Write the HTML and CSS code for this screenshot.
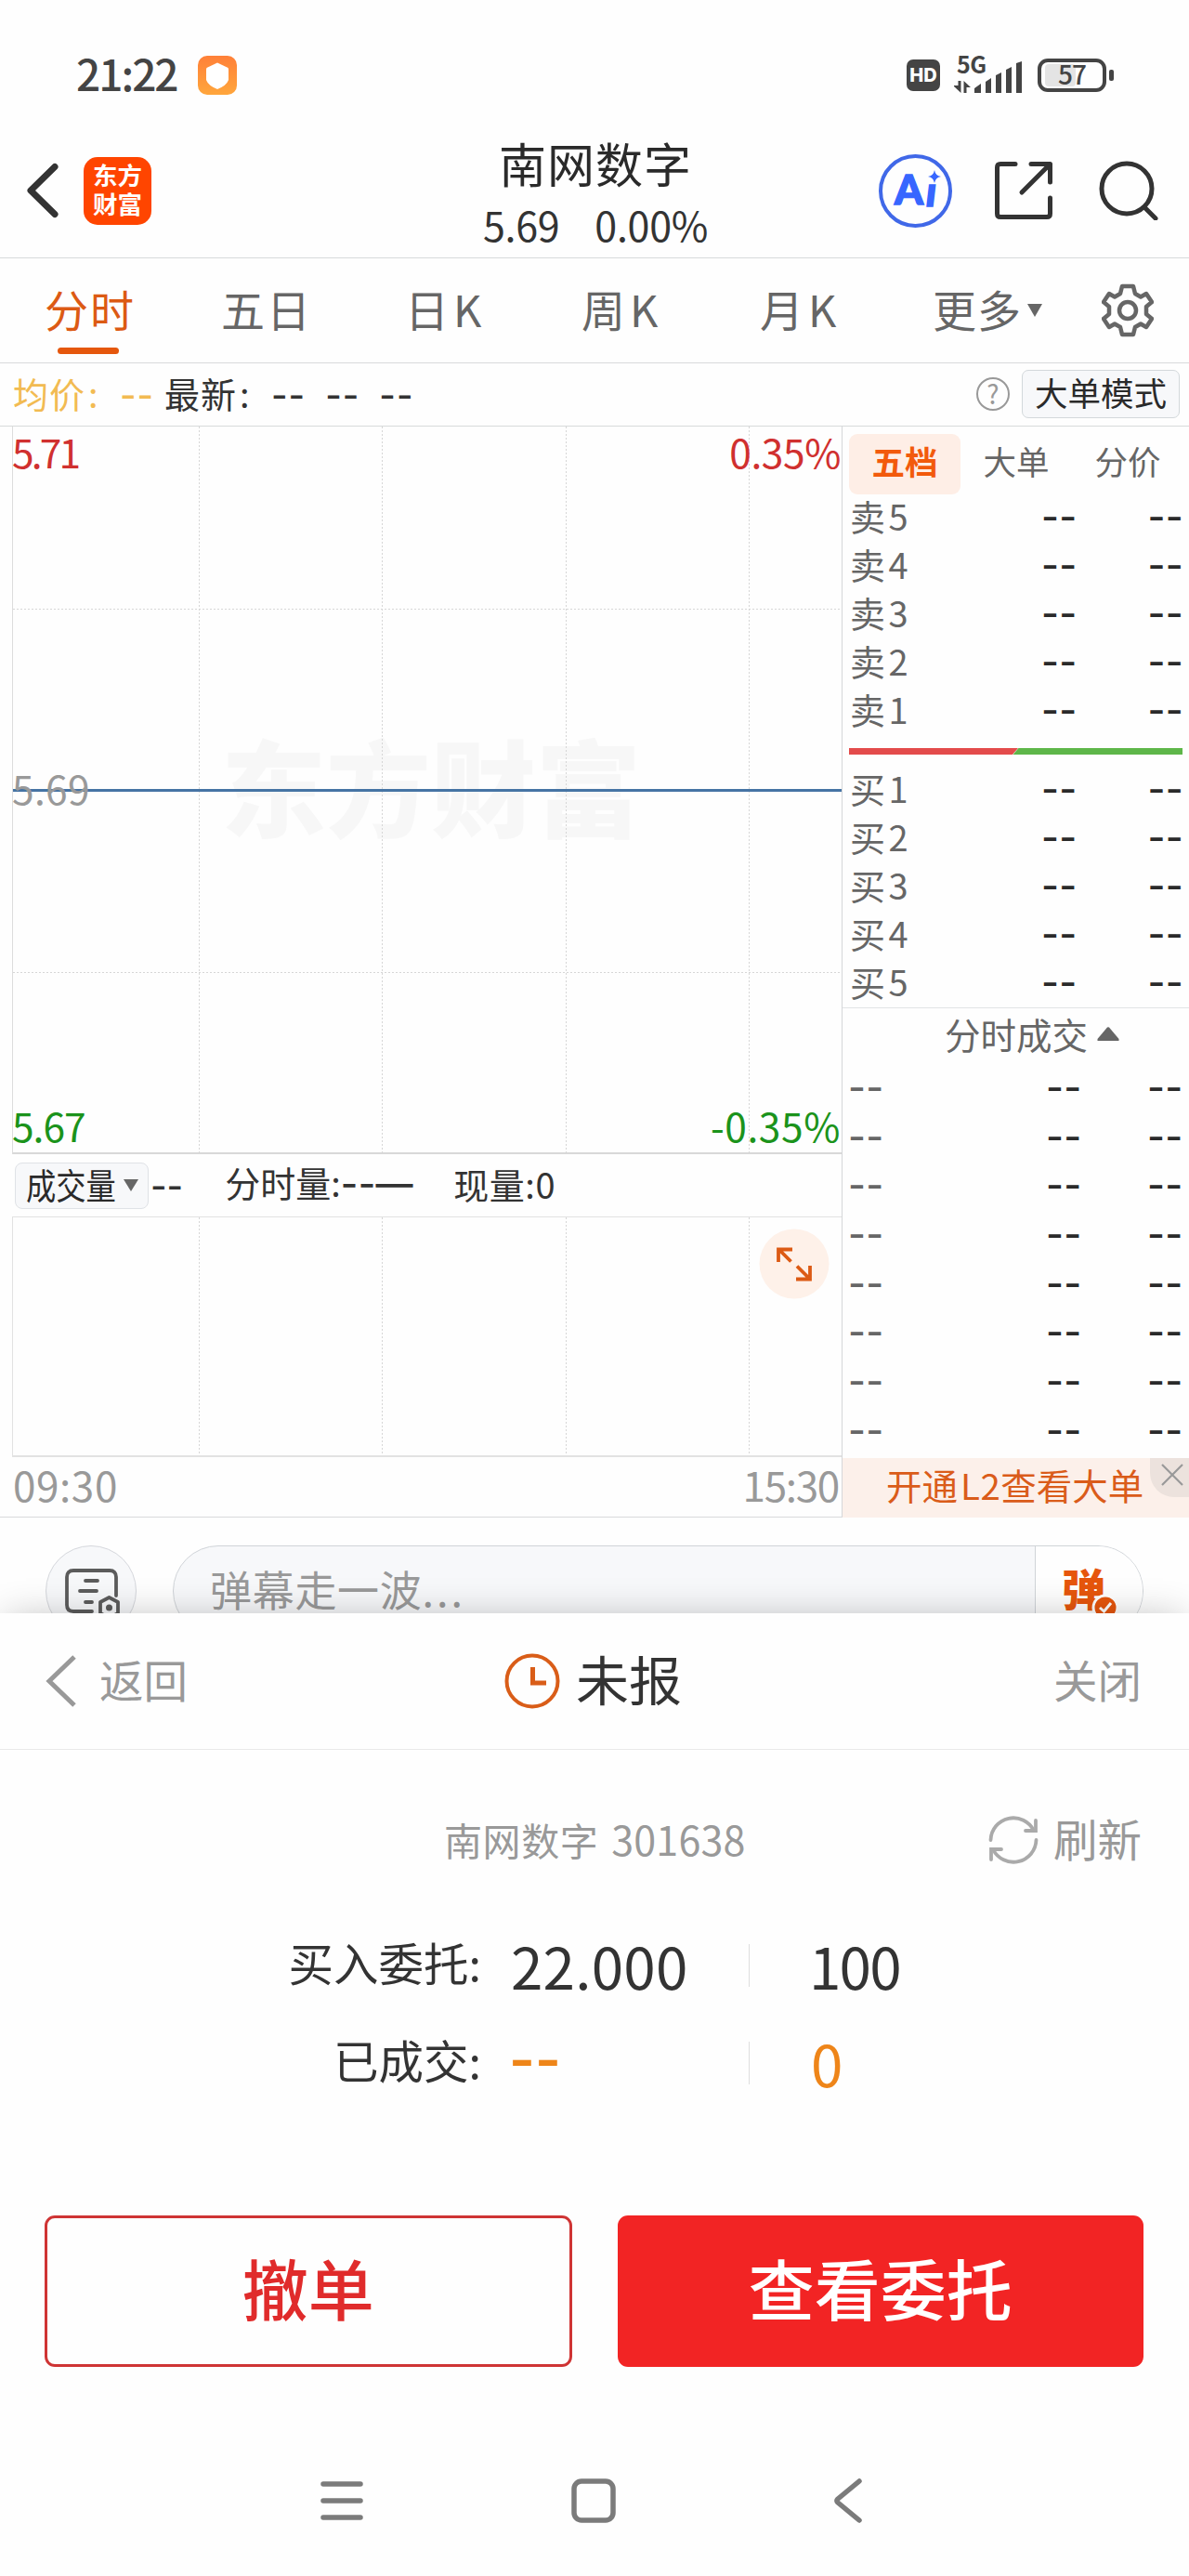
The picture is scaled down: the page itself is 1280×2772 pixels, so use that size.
FILE: index.html
```html
<!DOCTYPE html>
<html lang="zh-CN">
<head>
<meta charset="utf-8">
<title>南网数字</title>
<link rel="stylesheet" href="styles.css">
</head>
<body>
<div class="status">
  <span class="clock">21:22</span>
  <svg class="shield" width="42" height="42" viewBox="0 0 42 42"><defs><linearGradient id="g" x1="0" y1="0" x2="0" y2="1"><stop offset="0" stop-color="#ff8038"/><stop offset="1" stop-color="#ffa63c"/></linearGradient></defs><rect width="42" height="42" rx="10" fill="url(#g)"/><path d="M21 7.500L32.500 13Q33 14 33 15V26Q31 32 21 36Q11 32 9 26V15Q9 14 9.500 13Z" fill="#fff"/></svg>
  <span class="hd">HD</span>
  <span class="signal"><svg width="74" height="40" viewBox="0 0 74 40" fill="#444"><path d="M4.500 26H7.500V39L0 32V31H4.500ZM10.500 26L18 33H13.500V39H10.500Z"/><path d="M22 34L29 29V39H22ZM34 27L40 23V39H34ZM45 20L51 17V39H45ZM56 14L62 11V39H56ZM67 7L73 5V39H67Z"/></svg><span class="net">5G</span></span>
  <span class="battery"><span class="level"></span><span class="pct">57</span></span><span class="tip"></span>
</div>

<header class="header">
  <svg class="back" width="36" height="60" viewBox="0 0 36 60" fill="none" stroke="#333" stroke-width="7" stroke-linecap="round" stroke-linejoin="round"><path d="M31 4.500L5 30L31 55.500"/></svg>
  <span class="logo"><span>东方</span><span>财富</span></span>
  <div class="stock"><div class="stock-name">南网数字</div><div class="stock-price"><span>5.69</span><span>0.00%</span></div></div>
  <div class="ai"><b>A</b><b class="ai-i">ı</b><svg width="14" height="14" viewBox="0 0 14 14"><path d="M7 0Q8 6 14 7Q8 8 7 14Q6 8 0 7Q6 6 7 0Z" fill="#3766ff"/></svg></div>
  <svg class="share" width="62" height="62" viewBox="0 0 62 62" fill="none" stroke="#333" stroke-width="5" stroke-linecap="round" stroke-linejoin="round"><path d="M22 2.500H6Q2.500 2.500 2.500 6V56Q2.500 59.500 6 59.500H56Q59.500 59.500 59.500 56V39M39 2.500H59.500V22M57 5L29 33"/></svg>
  <svg class="search" width="64" height="64" viewBox="0 0 64 64" fill="none" stroke="#333" stroke-width="5" stroke-linecap="round"><circle cx="30" cy="30" r="27"/><path d="M50 51L61 62"/></svg>
</header>

<nav class="tabs">
  <span class="tab on">分时</span><span class="tab">五日</span><span class="tab">日K</span><span class="tab">周K</span><span class="tab">月K</span>
  <span class="tab more">更多<svg width="16" height="14" viewBox="0 0 16 14"><path d="M0 0H16L8 14Z" fill="#666"/></svg></span>
  <svg class="gear" width="56" height="58" viewBox="-28 -29 56 58" fill="none" stroke="#666" stroke-width="4.500" stroke-linejoin="round"><path d="M-6 -26H6L8 -18L14 -14.500L20 -18L26 -9L20 -4V4L26 9L20 18L14 14.500L8 18L6 26H-6L-8 18L-14 14.500L-20 18L-26 9L-20 4V-4L-26 -9L-20 -18L-14 -14.500L-8 -18Z"/><circle r="9"/></svg>
</nav>

<div class="info">
  <span class="avg">均价<i>:</i><em>--</em></span>
  <span class="last">最新<i>:</i><em>--</em><em>--</em><em>--</em></span>
  <span class="help">?</span>
  <span class="mode">大单模式</span>
</div>

<main class="main">
  <section class="left">
    <div class="chart">
      <div class="watermark">东方财富</div>
      <svg class="grid" width="892" height="782" viewBox="0 0 892 782" fill="none" stroke="#d6d6d6" stroke-dasharray="2 2"><path d="M200.500 0V782M397.500 0V782M595.500 0V782M792.500 0V782M0 196.500H892M0 587.500H892"/><path d="M0 391.500H892" stroke="#4674a4" stroke-width="3" stroke-dasharray="none"/></svg>
      <span class="lab tl">5.71</span><span class="lab tr">0.35%</span><span class="lab ml">5.69</span><span class="lab bl">5.67</span><span class="lab br">-0.35%</span>
    </div>
    <div class="volbar">
      <span class="volbtn"><span>成交量</span><svg width="16" height="13" viewBox="0 0 16 13"><path d="M0 0H16L8 13Z" fill="#666"/></svg></span>
      <em>--</em>
      <span class="v1">分时量:<em>--—</em></span>
      <span class="v2">现量:0</span>
    </div>
    <div class="volume">
      <svg class="grid" width="892" height="256" viewBox="0 0 892 256" fill="none" stroke="#d6d6d6" stroke-dasharray="2 2"><path d="M200.500 0V256M397.500 0V256M595.500 0V256M792.500 0V256"/></svg>
      <svg class="expand" width="76" height="76" viewBox="0 0 76 76" fill="none" stroke="#dc5a14" stroke-width="3.800"><circle cx="38" cy="38" r="37.500" fill="#fef1e9" stroke="none"/><path d="M21 36V22.500H36M22 23L34.500 35.500M55 40V54.500H40M54 53.500L41 40.500"/></svg>
    </div>
    <div class="times"><span>09:30</span><span class="end">15:30</span></div>
  </section>

  <aside class="book">
    <div class="btabs"><span class="bt on">五档</span><span class="bt">大单</span><span class="bt">分价</span></div>
    <div class="rows">
      <div class="row"><span>卖5</span><em>--</em><em>--</em></div>
      <div class="row"><span>卖4</span><em>--</em><em>--</em></div>
      <div class="row"><span>卖3</span><em>--</em><em>--</em></div>
      <div class="row"><span>卖2</span><em>--</em><em>--</em></div>
      <div class="row"><span>卖1</span><em>--</em><em>--</em></div>
    </div>
    <svg class="ratio" width="359" height="7" viewBox="0 0 359 7"><path d="M0 0H182L176 7H0Z" fill="#e34b4b"/><path d="M182.500 0H359V7H176.500Z" fill="#5eb649"/></svg>
    <div class="rows buy">
      <div class="row"><span>买1</span><em>--</em><em>--</em></div>
      <div class="row"><span>买2</span><em>--</em><em>--</em></div>
      <div class="row"><span>买3</span><em>--</em><em>--</em></div>
      <div class="row"><span>买4</span><em>--</em><em>--</em></div>
      <div class="row"><span>买5</span><em>--</em><em>--</em></div>
    </div>
    <div class="deals-head">分时成交<svg width="24" height="15" viewBox="0 0 24 15"><path d="M11 .5Q12 0 13 .5L23.500 13V15H.500V13Z" fill="#666"/></svg></div>
    <div class="deals">
      <div class="deal"><em>--</em><em>--</em><em>--</em></div>
      <div class="deal"><em>--</em><em>--</em><em>--</em></div>
      <div class="deal"><em>--</em><em>--</em><em>--</em></div>
      <div class="deal"><em>--</em><em>--</em><em>--</em></div>
      <div class="deal"><em>--</em><em>--</em><em>--</em></div>
      <div class="deal"><em>--</em><em>--</em><em>--</em></div>
      <div class="deal"><em>--</em><em>--</em><em>--</em></div>
      <div class="deal"><em>--</em><em>--</em><em>--</em></div>
    </div>
    <div class="banner">开通<span class="l2">L2</span>查看大单<span class="x"><svg width="24" height="24" viewBox="0 0 24 24" stroke="#999" stroke-width="2.200"><path d="M1 1L23 23M23 1L1 23"/></svg></span></div>
  </aside>
</main>

<div class="comment">
  <div class="round"><svg width="60" height="60" viewBox="0 0 60 60" fill="none" stroke="#5c5c5c" stroke-width="3.800" stroke-linecap="round"><path d="M55 29V9Q55 2 48 2H9Q2 2 2 9V39Q2 46 9 46H29M22 13H35M16 24H34M22 36H29"/><path d="M47.500 31L57 36V48L47.500 53L38 48V36Z" stroke-linejoin="round"/><circle cx="47.500" cy="42" r="3.500" fill="#5c5c5c" stroke="none"/></svg></div>
  <div class="pill"><span class="ph">弹幕走一波<span class="dots">...</span></span><div class="dan">弹<svg width="30" height="30" viewBox="0 0 30 30"><circle cx="15" cy="15" r="13" fill="#e6560c" stroke="#fff" stroke-width="3"/><path d="M9 15L13.500 19L21 10" fill="none" stroke="#fff" stroke-width="3"/></svg></div></div>
</div>

<section class="sheet">
  <div class="sheet-head">
    <span class="ret"><svg width="34" height="56" viewBox="0 0 34 56" fill="none" stroke="#999" stroke-width="5"><path d="M31 2L4 28L31 54"/></svg><b>返回</b></span>
    <span class="state"><svg width="60" height="60" viewBox="0 0 60 60" fill="none" stroke="#d95d18"><circle cx="30" cy="30" r="27.500" stroke-width="4"/><path d="M30.500 15V32H45" stroke-width="5"/></svg><b>未报</b></span>
    <span class="close"><b>关闭</b></span>
  </div>
  <div class="stock-line"><span class="code">南网数字 <b>301638</b></span><span class="refresh"><svg width="54" height="54" viewBox="0 0 54 54" fill="none" stroke="#aaa" stroke-width="3.800" stroke-linecap="round" stroke-linejoin="round"><path d="M2.500 27A24.500 24.500 0 0 1 49 17M51.500 27A24.500 24.500 0 0 1 5 37"/><path d="M51 6V17H40M3 48V37H14" stroke-linejoin="miter"/></svg><b>刷新</b></span></div>
  <div class="order"><span class="k">买入委托:</span><span class="v">22.000</span><span class="n">100</span></div>
  <div class="order done"><span class="k">已成交:</span><span class="v"><em>--</em></span><span class="n">0</span></div>
  <div class="actions"><span class="btn ghost">撤单</span><span class="btn solid">查看委托</span></div>
  <div class="sysnav">
    <svg width="46" height="42" viewBox="0 0 46 42" stroke="#7b7b7b" stroke-width="5.500" stroke-linecap="round"><path d="M3 3H43M3 21H43M3 39H43"/></svg>
    <svg width="48" height="48" viewBox="0 0 48 48" fill="none" stroke="#7b7b7b" stroke-width="5.500"><rect x="3" y="3" width="42" height="42" rx="8"/></svg>
    <svg width="32" height="48" viewBox="0 0 32 48" fill="none" stroke="#7b7b7b" stroke-width="5.500" stroke-linecap="round" stroke-linejoin="round"><path d="M28 3L5 22Q3 24 5 26L28 45"/></svg>
  </div>
</section>
</body>
</html>
```
FILE: styles.css
```css
* { box-sizing: border-box; }
body { margin: 0; width: 1280px; height: 2772px; overflow: hidden; background: #fefefe; color: #333; font-family: "Noto Sans CJK SC", sans-serif; font-size: 38px; line-height: 1; white-space: nowrap; }
svg { display: block; flex: none; }
em { font-family: Inter, sans-serif; font-style: normal; font-weight: 500; }
i { font-style: normal; }

.status { display: flex; align-items: center; height: 160px; padding: 2px 0 0 82px; color: #444; }
.clock { width: 131px; font-size: 46px; font-weight: 500; letter-spacing: -2px; padding-bottom: 6px; }
.hd { margin: 0 0 0 721px; width: 36px; height: 34px; border-radius: 7px; background: #444; color: #fff; font: 800 20px/34px Inter, sans-serif; text-align: center; }
.signal { position: relative; margin-left: 15px; }
.net { position: absolute; left: 3px; top: -5px; font-size: 25px; font-weight: 700; line-height: 25px; letter-spacing: -.5px; }
.battery { position: relative; display: flex; align-items: center; justify-content: center; margin-left: 16px; width: 74px; height: 36px; border: 4px solid #444; border-radius: 11px; }
.level { position: absolute; left: 4px; top: 2px; width: 33px; height: 24px; border-radius: 4px; background: #e4e4e4; }
.pct { position: relative; font-size: 28px; line-height: 28px; letter-spacing: -1px; font-weight: 500; padding-bottom: 4px; }
.tip { margin-left: 3px; width: 5px; height: 12px; border-radius: 2px; background: #444; }

.header { display: flex; align-items: center; height: 118px; padding-bottom: 27px; border-bottom: 1px solid #d8dadb; }
.back { margin-left: 28px; }
.logo { display: flex; flex-direction: column; justify-content: center; gap: 3px; margin-left: 26px; width: 73px; height: 73px; border-radius: 15px; background: #ff4500; color: #fff; font-size: 26.500px; font-weight: 700; line-height: 28px; text-align: center; padding-bottom: 3px; }
.stock { flex: none; width: 610px; margin-left: 173px; margin-top: 6px; display: flex; flex-direction: column; align-items: center; }
.stock-name { font-size: 51px; letter-spacing: 1px; color: #2a2a2a; line-height: 60px; }
.stock-price { display: flex; gap: 38px; margin-top: 6px; font-size: 43px; letter-spacing: -.3px; line-height: 60px; }
.ai { position: relative; flex: none; display: flex; justify-content: center; gap: 3px; width: 79px; height: 79px; border: 4.500px solid #4068e8; border-radius: 50%; color: #3766ff; font: 900 44px/66px Lato, sans-serif; -webkit-text-stroke: 1.500px #3766ff; }
.ai-i { font-style: italic; line-height: 71px; }
.ai svg { position: absolute; left: 49px; top: 13px; }
.share { margin-left: 46px; }
.search { margin-left: 50px; }

.tabs { display: flex; align-items: center; height: 113px; border-bottom: 1px solid #d8dadb; font-size: 47px; letter-spacing: 2px; color: #666; }
.tab { position: relative; line-height: 112px; padding-bottom: 6px; height: 112px; margin-top: -4px; }
.tab:nth-child(1) { margin-left: 48px; width: 190px; color: #dc5a14; }
.tab:nth-child(2) { width: 198px; }
.tab:nth-child(3) { width: 190px; letter-spacing: 5px; }
.tab:nth-child(4) { width: 192px; letter-spacing: 5px; }
.tab:nth-child(5) { width: 186px; letter-spacing: 5px; }
.tab.on::after { content: ""; position: absolute; left: 14px; top: 98px; width: 66px; height: 7px; border-radius: 4px; background: #e5570d; }
.tab.more { display: flex; align-items: center; gap: 6px; width: 182px; padding-bottom: 1px; letter-spacing: 1px; }
.more svg { margin-top: 5px; }

.info { display: flex; align-items: center; height: 68px; border-bottom: 1px solid #d8dadb; letter-spacing: 1px; padding-bottom: 1px; }
.info em { letter-spacing: 1px; }
.info i { display: inline-block; width: 37px; padding-left: 3px; }
.avg { margin-left: 14px; color: #f2bb52; width: 163px; }
.last { width: 874px; }
.last em { margin-right: 21px; }
.help { width: 36px; height: 36px; border: 2.500px solid #999; border-radius: 50%; color: #999; font: 28px/31px "Noto Sans CJK SC", sans-serif; text-align: center; letter-spacing: 0; }
.mode { margin-left: 13px; width: 170px; height: 52px; border: 1px solid #d3d8db; border-radius: 7px; background: #f7f8fa; color: #2a2a2a; font-size: 35.500px; line-height: 46px; text-align: center; letter-spacing: 0; }

.main { display: flex; height: 1174px; border-bottom: 1px solid #d8dadb; }
.left { width: 906px; }
.chart { position: relative; margin-left: 13px; width: 893px; height: 783px; border-left: 1px solid #ddd; border-bottom: 2px solid #d8d8d8; }
.watermark { position: absolute; left: 224px; top: 324px; font-size: 113px; line-height: 120px; font-weight: 900; color: #f7f7f7; }
.grid { position: relative; }
.lab { position: absolute; font-size: 42.500px; line-height: 44px; letter-spacing: -.4px; }
.tl { left: -1px; top: 5px; color: #d0302f; letter-spacing: -2.800px; }
.tr { right: 1px; top: 5px; color: #d0302f; }
.ml { left: -1px; top: 367px; color: #999; letter-spacing: .3px; }
.bl { left: -1px; top: 730px; color: #1b931b; letter-spacing: -1px; }
.br { right: 1px; top: 730px; color: #1b931b; letter-spacing: .6px; }
.volbar { display: flex; align-items: center; height: 67px; padding-left: 16px; }
.volbtn { display: flex; align-items: center; width: 144px; height: 50px; border: 1px solid #dfe2e6; border-radius: 8px; background: #f7f8fa; color: #2a2a2a; padding: 0 0 4px 11px; }
.volbtn span { transform: scaleX(.85); transform-origin: 0 50%; width: 105px; }
.volbtn svg { margin-top: 4px; }
.volbar > em { margin-left: 2px; }
.v1 { margin-left: 45px; width: 246px; padding-bottom: 4px; }
.v1 em { font-size: 40px; letter-spacing: .4px; }
.v2 { padding-bottom: 4px; letter-spacing: .6px; }
.volume { position: relative; margin-left: 13px; width: 893px; height: 259px; border: solid #e2e2e2; border-width: 1px 0 2px 1px; }
.expand { position: absolute; left: 803px; top: 12px; }
.times { display: flex; justify-content: space-between; padding: 0 3px 0 14px; color: #999; font-size: 44px; line-height: 58px; letter-spacing: .6px; }
.times .end { letter-spacing: -1.300px; }

.book { width: 374px; border-left: 1px solid #d5d7d9; }
.btabs { display: flex; margin: 8px 0 0 7px; font-size: 35.500px; line-height: 58px; color: #666; }
.bt { width: 120px; height: 65px; text-align: center; border-radius: 9px; }
.bt.on { background: #feeee6; color: #f25a0c; font-weight: 700; }
.row { display: grid; grid-template-columns: 206px 114.500px 40px; height: 52px; line-height: 45px; padding-left: 8px; color: #666; letter-spacing: 3.500px; }
.rows em, .deals em { font-size: 41px; color: #2a2a2a; line-height: 49px; letter-spacing: .3px; }
.ratio { margin: 13px 0 0 7px; }
.buy { padding-top: 13px; height: 273px; border-bottom: 1px solid #e2e4e5; }
.deals-head { display: flex; align-items: center; gap: 10px; height: 60px; padding: 0 0 5px 110px; color: #666; font-size: 38.500px; }
.deal { display: grid; grid-template-columns: 213px 109px 40px; height: 52.700px; padding-left: 6px; }
.deals { height: 424px; }
.deals em { line-height: 51px; }
.deals em:first-child { color: #666; }
.banner { position: relative; height: 64px; line-height: 57px; padding-left: 47px; background: #fcf0ea; color: #da5c1a; font-size: 38.500px; }
.l2 { padding-left: 3px; letter-spacing: .5px; }
.x { position: absolute; right: 0; top: 0; width: 42px; height: 42px; border-bottom-left-radius: 26px; background: #ece2dd; display: flex; align-items: center; justify-content: center; padding: 0 0 7px 6px; }

.comment { display: flex; height: 103px; overflow: hidden; padding: 30px 0 0 49px; }
.round { flex: none; display: flex; width: 98px; height: 98px; border: 1px solid #d5d7dc; border-radius: 50%; background: #f7f8fa; padding: 24px 0 0 20px; }
.pill { flex: none; display: flex; margin-left: 39px; width: 1045px; height: 98px; border: 1px solid #d0d4d8; border-radius: 49px; background: #f7f8fa; overflow: hidden; }
.ph { width: 927px; padding-left: 39px; color: #999; font-size: 45px; letter-spacing: .7px; line-height: 91px; }
.dots { letter-spacing: 3px; }
.dan { position: relative; flex: 1; border-left: 1px solid #d0d4d8; background: #fefefe; color: #e6560c; font-size: 47px; font-weight: 900; line-height: 88px; padding-left: 28px; }
.dan svg { position: absolute; left: 60px; top: 51px; }

.sheet { position: relative; height: 1036px; background: #fefefe; box-shadow: 0 0 40px -8px rgba(0,0,0,.3); }
.sheet b { font-weight: 400; }
.sheet-head { display: grid; grid-template-columns: 494px 591px 1fr; align-items: center; height: 147px; border-bottom: 1px solid #e9e9e9; padding: 0 0 0 49px; color: #999; font-size: 47.500px; }
.sheet-head > span { display: flex; align-items: center; height: 66px; line-height: 60px; }
.sheet-head b { padding-bottom: 5px; }
.ret { gap: 24px; }
.state { color: #333; font-size: 57px; gap: 17px; }
.sheet-head .state b { padding-bottom: 9px; }
.stock-line { display: flex; align-items: center; height: 60px; margin-top: 67px; color: #999; line-height: 60px; }
.code { margin-left: 478px; width: 586px; font-size: 41px; letter-spacing: .6px; padding-bottom: 4px; }
.code b { font-size: 43px; margin-left: 4px; letter-spacing: .2px; }
.refresh { display: flex; align-items: center; gap: 16px; font-size: 47.500px; height: 60px; line-height: 54px; }
.refresh b { padding-bottom: 4px; }
.order { display: grid; grid-template-columns: 518px 289px 1fr; height: 105px; margin-top: 49px; line-height: 110px; font-size: 62px; }
.order + .order { margin-top: 0; }
.order .k { text-align: right; font-size: 48.500px; line-height: 104px; }
.order .v { padding-left: 32px; letter-spacing: .2px; background: linear-gradient(#dedede, #dedede) 288px 33px / 1px 46px no-repeat; }
.order .n { padding-left: 64px; letter-spacing: -1.800px; }
.order.done .n { padding-left: 66px; }
.done .v, .done .n { color: #ee8519; }
.done em { display: block; font-size: 60px; font-weight: 600; letter-spacing: 0; line-height: 105px; margin-left: -2px; }
.actions { display: flex; gap: 49px; margin: 115px 49px 0 48px; }
.btn { width: 568px; height: 163px; border-radius: 11px; text-align: center; font-size: 71px; line-height: 153px; font-weight: 500; }
.solid { width: 567px; background: #f22424; color: #fff; }
.ghost { border: 3px solid #cf3434; color: #e02b2b; line-height: 147px; }
.sysnav { display: flex; align-items: center; height: 48px; margin-top: 120px; padding-left: 345px; }
.sysnav svg:nth-child(2) { margin-left: 224px; }
.sysnav svg:nth-child(3) { margin-left: 234px; }
```
